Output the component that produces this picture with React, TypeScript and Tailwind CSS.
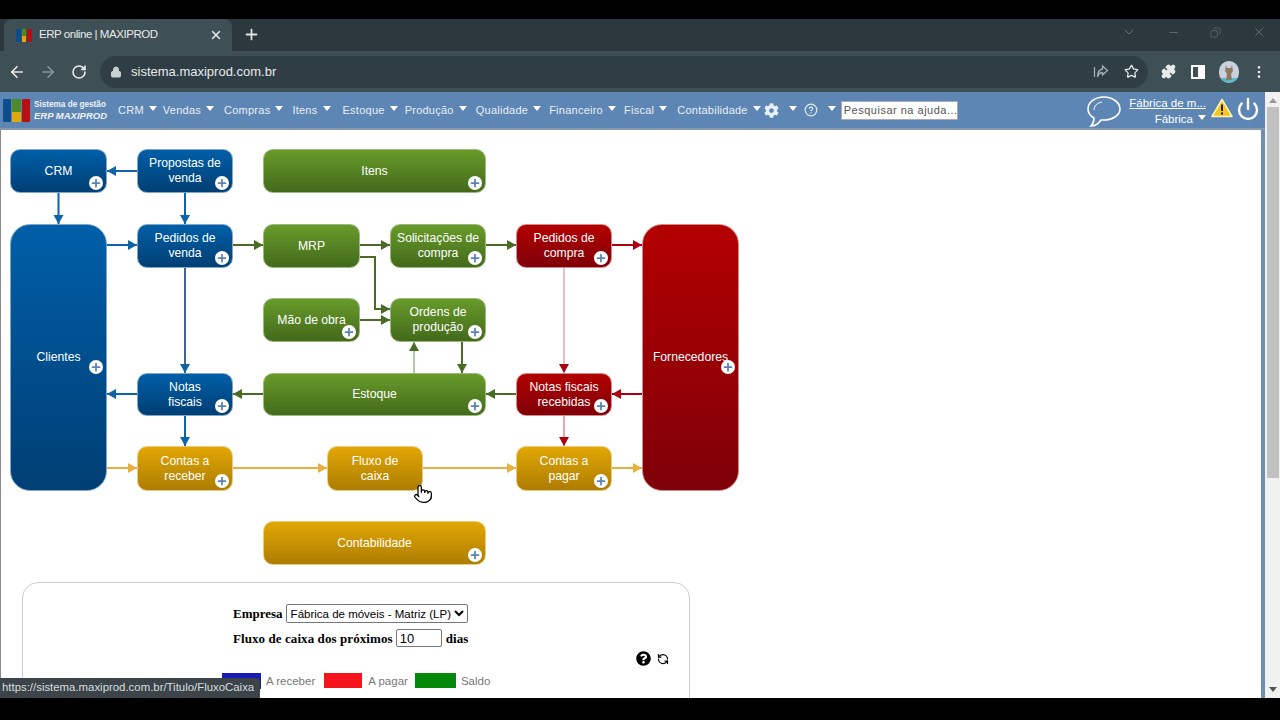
import { ArrowLeft, ArrowRight, RotateCw, Lock, Star, Puzzle, EllipsisVertical, ChevronDown, Minus, Copy, X, Plus, CircleHelp, Power, Pointer, RefreshCcw } from "lucide-react"
import { FaCog, FaQuestionCircle } from "react-icons/fa"

const font = "font-['Liberation_Sans',Arial,sans-serif]"

const menus = [
  { name: "CRM", gap: "mr-[6px]" },
  { name: "Vendas", gap: "mr-[10px]" },
  { name: "Compras", gap: "mr-[9px]" },
  { name: "Itens", gap: "mr-[12px]" },
  { name: "Estoque", gap: "mr-[7px]" },
  { name: "Produção", gap: "mr-[9px]" },
  { name: "Qualidade", gap: "mr-[8px]" },
  { name: "Financeiro", gap: "mr-[8px]" },
  { name: "Fiscal", gap: "mr-[10px]" },
  { name: "Contabilidade", gap: "mr-[8px]" },
]

const blue = "bg-gradient-to-b from-[#005fa8] to-[#003f74] border-[#7fa6c8]"
const green = "bg-gradient-to-b from-[#689b2a] to-[#436a1b] border-[#9db87e]"
const red = "bg-gradient-to-b from-[#b30000] to-[#7f0008] border-[#d58a8a]"
const gold = "bg-gradient-to-b from-[#e2a704] to-[#ad7d02] border-[#eccb80]"

const nodes = [
  { label: ["CRM"], box: "left-[9px] top-[19px] w-[97px] h-[44px] rounded-[10px]", color: blue, plus: true },
  { label: ["Propostas de", "venda"], box: "left-[136px] top-[19px] w-[96px] h-[44px] rounded-[10px]", color: blue, plus: true },
  { label: ["Itens"], box: "left-[262px] top-[19px] w-[223px] h-[44px] rounded-[10px]", color: green, plus: true },
  { label: ["Clientes"], box: "left-[9px] top-[94px] w-[97px] h-[267px] rounded-[20px]", color: blue, plus: true, tall: true },
  { label: ["Pedidos de", "venda"], box: "left-[136px] top-[94px] w-[96px] h-[44px] rounded-[10px]", color: blue, plus: true },
  { label: ["MRP"], box: "left-[262px] top-[94px] w-[97px] h-[44px] rounded-[10px]", color: green },
  { label: ["Solicitações de", "compra"], box: "left-[389px] top-[94px] w-[96px] h-[44px] rounded-[10px]", color: green, plus: true },
  { label: ["Pedidos de", "compra"], box: "left-[515px] top-[94px] w-[96px] h-[44px] rounded-[10px]", color: red, plus: true },
  { label: ["Fornecedores"], box: "left-[641px] top-[94px] w-[97px] h-[267px] rounded-[20px]", color: red, plus: true, tall: true },
  { label: ["Mão de obra"], box: "left-[262px] top-[168px] w-[97px] h-[44px] rounded-[10px]", color: green, plus: true },
  { label: ["Ordens de", "produção"], box: "left-[389px] top-[168px] w-[96px] h-[44px] rounded-[10px]", color: green, plus: true },
  { label: ["Notas", "fiscais"], box: "left-[136px] top-[243px] w-[96px] h-[43px] rounded-[10px]", color: blue, plus: true },
  { label: ["Estoque"], box: "left-[262px] top-[243px] w-[223px] h-[43px] rounded-[10px]", color: green, plus: true },
  { label: ["Notas fiscais", "recebidas"], box: "left-[515px] top-[243px] w-[96px] h-[43px] rounded-[10px]", color: red, plus: true },
  { label: ["Contas a", "receber"], box: "left-[136px] top-[316px] w-[96px] h-[45px] rounded-[10px]", color: gold, plus: true },
  { label: ["Fluxo de", "caixa"], box: "left-[326px] top-[316px] w-[96px] h-[45px] rounded-[10px]", color: gold },
  { label: ["Contas a", "pagar"], box: "left-[515px] top-[316px] w-[96px] h-[45px] rounded-[10px]", color: gold, plus: true },
  { label: ["Contabilidade"], box: "left-[262px] top-[391px] w-[223px] h-[44px] rounded-[10px]", color: gold, plus: true },
]

// page coordinates: points of the line, last one is the tip
const arrows: { pts: number[][]; color: string; line?: string; w?: number }[] = [
  { pts: [[137, 171], [107, 171]], color: "#0f64a8" },
  { pts: [[58.5, 193], [58.5, 224]], color: "#0f64a8" },
  { pts: [[185, 193], [185, 224]], color: "#0f64a8" },
  { pts: [[107, 245], [137, 245]], color: "#0f64a8" },
  { pts: [[185, 268], [185, 373]], color: "#0f64a8", line: "#44678c" },
  { pts: [[137, 394], [107, 394]], color: "#0f64a8" },
  { pts: [[185, 416], [185, 446]], color: "#0f64a8" },
  { pts: [[233, 245], [263, 245]], color: "#4a6b24" },
  { pts: [[360, 245], [390, 245]], color: "#4a6b24" },
  { pts: [[486, 245], [516, 245]], color: "#4a6b24" },
  { pts: [[360, 257], [375, 257], [375, 309], [390, 309]], color: "#4a6b24" },
  { pts: [[360, 320], [390, 320]], color: "#4a6b24" },
  { pts: [[414, 373], [414, 342]], color: "#4a6b24", line: "#6f8a58", w: 1 },
  { pts: [[462, 342], [462, 373]], color: "#4a6b24" },
  { pts: [[263, 394], [233, 394]], color: "#4a6b24" },
  { pts: [[516, 394], [486, 394]], color: "#4a6b24" },
  { pts: [[612, 245], [642, 245]], color: "#ad0010" },
  { pts: [[564, 268], [564, 373]], color: "#ad0010", line: "#d87a88", w: 1 },
  { pts: [[642, 394], [612, 394]], color: "#ad0010" },
  { pts: [[564, 416], [564, 446]], color: "#ad0010", line: "#cf5060", w: 1 },
  { pts: [[107, 468], [137, 468]], color: "#e8b040" },
  { pts: [[233, 468], [327, 468]], color: "#e8b040" },
  { pts: [[423, 468], [516, 468]], color: "#e8b040" },
  { pts: [[612, 468], [642, 468]], color: "#e8b040" },
]

function Arrow({ pts, color, line, w = 2 }: { pts: number[][]; color: string; line?: string; w?: number }) {
  const tip = pts[pts.length - 1]
  const prev = pts[pts.length - 2]
  const dx = Math.sign(tip[0] - prev[0])
  const dy = Math.sign(tip[1] - prev[1])
  const bx = tip[0] - dx * 9
  const by = tip[1] - dy * 9
  const head = `${tip[0]},${tip[1]} ${bx - dy * 5},${by - dx * 5} ${bx + dy * 5},${by + dx * 5}`
  return (
    <g>
      <polyline points={pts.map((p) => p.join(",")).join(" ")} fill="none" stroke={line ?? color} strokeWidth={w} />
      <polygon points={head} fill={color} />
    </g>
  )
}

function PlusBadge({ className }: { className: string }) {
  return (
    <span className={`absolute w-[14px] h-[14px] rounded-full bg-white flex items-center justify-center ${className}`}>
      <Plus size={12} strokeWidth={3.5} className="text-[#5a82b0]" />
    </span>
  )
}

function Caret({ className = "ml-[5px]" }: { className?: string }) {
  return <span className={`w-0 h-0 border-x-[4.5px] border-x-transparent border-t-[5px] border-t-white mb-[3px] ${className}`} />
}

function Logo({ className }: { className: string }) {
  return (
    <div className={`flex gap-[1px] shrink-0 ${className}`}>
      <div className="flex-1 bg-[#0d4f8c] rounded-[1px]" />
      <div className="flex-1 flex flex-col">
        <div className="flex-[3] bg-[#4f8a2a]" />
        <div className="flex-[2] bg-[#e0a80c]" />
      </div>
      <div className="flex-1 bg-[#b80f14] rounded-[1px]" />
    </div>
  )
}

function BrowserChrome() {
  return (
    <>
      <div className="h-[32px] bg-[#2c383e] flex items-end pl-[4px] relative">
        <div className="w-[228px] h-[32px] bg-[#3f4f56] rounded-t-lg flex items-center pl-[12px] pr-[9px] text-[#e6eaec]">
          <Logo className="w-[16px] h-[13px]" />
          <span className="ml-[7px] text-[11.5px] flex-1 tracking-[-0.45px] whitespace-nowrap">ERP online | MAXIPROD</span>
          <X size={14} strokeWidth={2.5} />
        </div>
        <Plus size={17} strokeWidth={2.5} className="ml-[11px] mb-[8px] text-[#dfe3e5]" />
        <ChevronDown size={16} strokeWidth={1.5} className="absolute left-[1121px] top-[5px] text-[#66747b]" />
        <Minus size={13} strokeWidth={1.5} className="absolute left-[1167px] top-[7px] text-[#66747b]" />
        <Copy size={11} strokeWidth={1.5} className="absolute left-[1210px] top-[8px] -scale-x-100 text-[#66747b]" />
        <X size={14} strokeWidth={1.5} className="absolute left-[1252px] top-[6px] text-[#66747b]" />
      </div>
      <div className="h-[41px] bg-[#3f4f56] flex items-center relative text-[#e6eaec]">
        <ArrowLeft size={18} strokeWidth={2.2} className="ml-[8px]" />
        <ArrowRight size={18} strokeWidth={2.2} className="ml-[13px] text-[#87949a]" />
        <RotateCw size={16} strokeWidth={2.4} className="ml-[14px]" />
        <div className="ml-[13px] w-[1048px] h-[32px] bg-[#2f3d44] rounded-full flex items-center pl-[10px]">
          <Lock size={12} className="text-[#c8d0d4] fill-[#c8d0d4]" />
          <span className="ml-[9px] text-[13px]">sistema.maxiprod.com.br</span>
          <svg width={16} height={16} viewBox="0 0 16 16" fill="none" stroke="#a4aeb3" strokeWidth={1.3} className="ml-auto">
            <path d="M1.5 3v10" />
            <path d="M9.5 2l5 4.5-5 4.5V8.5C7 8.5 5.5 10 4.5 13c0-4.5 2-7.5 5-8z" />
          </svg>
          <Star size={15} strokeWidth={2} className="ml-[15px] mr-[9px]" />
        </div>
        <Puzzle size={15} className="ml-[13px] fill-[#e6eaec]" />
        <div className="ml-[15px] w-[14px] h-[14px] border-2 border-white border-r-[7px]" />
        <svg width={20} height={22} viewBox="0 0 20 22" className="ml-[14px] rounded-full">
          <rect width={20} height={22} fill="#c9d2dc" />
          <rect y={17} width={20} height={5} fill="#5fb6cf" />
          <path d="M7 4l1 3h4l1-3 1 6-2 3 1 6H7l1-6-2-3z" fill="#8d7a62" />
        </svg>
        <EllipsisVertical size={16} className="ml-[12px]" />
      </div>
    </>
  )
}

function NavBar() {
  return (
    <div className="h-[38px] bg-[#5d86b4] border-b-2 border-[#8699ad] flex items-center text-white relative">
      <Logo className="ml-[3px] w-[27px] h-[23px]" />
      <div className="ml-[4px] w-[78px] leading-[11px] font-bold text-[#eef2f6] whitespace-nowrap">
        <div className="text-[8.2px]">Sistema de gestão</div>
        <div className="text-[9.5px] italic">ERP MAXIPROD</div>
      </div>
      <div className="ml-[6px] flex items-center text-[11px] tracking-[0.25px] text-[#e8eef5]">
        {menus.map((m) => (
          <div key={m.name} className={`flex items-center ${m.gap}`}>
            <span>{m.name}</span>
            <Caret />
          </div>
        ))}
        <FaCog size={15} className="-ml-[5px]" />
        <Caret className="ml-[10px]" />
        <CircleHelp size={14} strokeWidth={2} className="ml-[7px]" />
        <Caret className="ml-[10px]" />
        <div className="ml-[5px] w-[117px] h-[19px] bg-white border border-[#aab] flex items-center px-[2px] text-[#555] tracking-[0.5px] text-[11px] whitespace-nowrap">
          Pesquisar na ajuda...
        </div>
      </div>
      <svg width={36} height={34} viewBox="0 0 36 34" fill="none" stroke="white" className="absolute left-[1086px] top-[3px]">
        <path d="M18 2C9 2 2 7 2 14c0 4 2.500 7 6 9 0 3-1 6-3 8 4 0 8-3 10-6h3c9 0 16-5 16-11S27 2 18 2z" strokeWidth={1.6} />
        <path d="M8 15c0-4 3-7 8-8" strokeWidth={1} />
      </svg>
      <div className="absolute left-[1129px] top-[3px] w-[77px] text-[11.5px] leading-[16px] text-right">
        <div className="underline whitespace-nowrap">Fábrica de m...</div>
        <div className="flex items-center justify-end">Fábrica<Caret /></div>
      </div>
      <svg width={22} height={20} viewBox="0 0 22 20" className="absolute left-[1211px] top-[6px]">
        <path d="M11 1.500L21 18.500H1z" fill="#f3c623" stroke="#fff3b0" strokeWidth={1.5} strokeLinejoin="round" />
        <path d="M11 6.500v6.500" stroke="#222" strokeWidth={2} />
        <path d="M11 14.500v2" stroke="#222" strokeWidth={2} />
      </svg>
      <Power size={24} strokeWidth={2.4} className="absolute left-[1236px] top-[5px]" />
    </div>
  )
}

function Diagram() {
  return (
    <div className="relative h-[450px]">
      <svg className="absolute left-0 top-0" width={760} height={450} viewBox="1 130 760 450">
        {arrows.map((a, i) => (
          <Arrow key={i} {...a} />
        ))}
      </svg>
      {nodes.map((n) => (
        <div key={n.label.join(" ")} className={`absolute border flex flex-col items-center justify-center text-white text-[12.2px] leading-[15px] ${n.box} ${n.color}`}>
          {n.label.map((l) => (
            <span key={l} className="whitespace-nowrap">{l}</span>
          ))}
          {n.plus && <PlusBadge className={n.tall ? "right-[3px] top-[135px]" : "right-[3px] bottom-[2px]"} />}
        </div>
      ))}
      <Pointer size={20} strokeWidth={1.5} className="absolute left-[412px] top-[354px] text-black fill-white" />
    </div>
  )
}

function Panel() {
  return (
    <div className="ml-[21px] mt-[2px] w-[668px] h-[140px] border border-[#cfcfcf] rounded-t-2xl relative font-['Liberation_Serif',serif]">
      <div className="flex items-center mt-[21px] ml-[210px] text-[13px] font-bold text-black">
        <span>Empresa</span>
        <select defaultValue="a" className="ml-[3px] w-[182px] h-[19px] border border-[#777] rounded-[2px] bg-white text-[11.5px] font-normal font-['Liberation_Sans',sans-serif]">
          <option value="a">Fábrica de móveis - Matriz (LP)</option>
        </select>
      </div>
      <div className="flex items-center mt-[5px] ml-[210px] text-[13px] font-bold tracking-[0.08px] text-black">
        <span>Fluxo de caixa dos próximos</span>
        <input readOnly value="10" className="ml-[3px] w-[46px] h-[18px] border border-[#777] rounded-[2px] px-[3px] font-normal font-['Liberation_Sans',sans-serif]" />
        <span className="ml-[4px]">dias</span>
      </div>
      <div className="flex justify-end items-center gap-[6px] mr-[20px] mt-[3px] text-black">
        <FaQuestionCircle size={15} />
        <RefreshCcw size={12} strokeWidth={2.5} />
      </div>
      <div className={`flex items-start mt-[7px] ml-[199px] text-[11.5px] text-[#777] ${font}`}>
        <div className="w-[39px] h-[16px] bg-[#1a1ab4]" />
        <span className="ml-[5px]">A receber</span>
        <div className="ml-[9px] w-[38px] h-[15px] bg-[#f5141c]" />
        <span className="ml-[6px]">A pagar</span>
        <div className="ml-[7px] w-[41px] h-[15px] bg-[#04880a]" />
        <span className="ml-[5px]">Saldo</span>
      </div>
    </div>
  )
}

export default function App() {
  return (
    <div className={`w-[1280px] h-[720px] bg-black flex flex-col overflow-hidden ${font}`}>
      <div className="h-[19px]" />
      <BrowserChrome />
      <div className="h-[606px] flex relative">
        <div className="w-[1265px] flex flex-col">
          <NavBar />
          <div className="h-[568px] bg-white border-l border-r-4 border-l-[#8a8a8a] border-r-[#6e8fb2] overflow-hidden">
            <Diagram />
            <Panel />
          </div>
        </div>
        <div className="w-[15px] bg-[#f1f1f1] flex flex-col items-center">
          <div className="mt-[6px] w-0 h-0 border-x-[4px] border-x-transparent border-b-[5px] border-b-[#999]" />
          <div className="mt-[4px] w-[12px] h-[371px] bg-[#c1c1c1]" />
          <div className="mt-auto mb-[6px] w-0 h-0 border-x-[4px] border-x-transparent border-t-[5px] border-t-[#555]" />
        </div>
        <div className="absolute left-0 bottom-0 w-[260px] h-[20px] bg-[#3c4449] text-[#d7dcdf] text-[11.4px] flex items-center pl-[2px] rounded-tr-sm whitespace-nowrap">
          https://sistema.maxiprod.com.br/Titulo/FluxoCaixa
        </div>
      </div>
      <div className="h-[22px]" />
    </div>
  )
}
